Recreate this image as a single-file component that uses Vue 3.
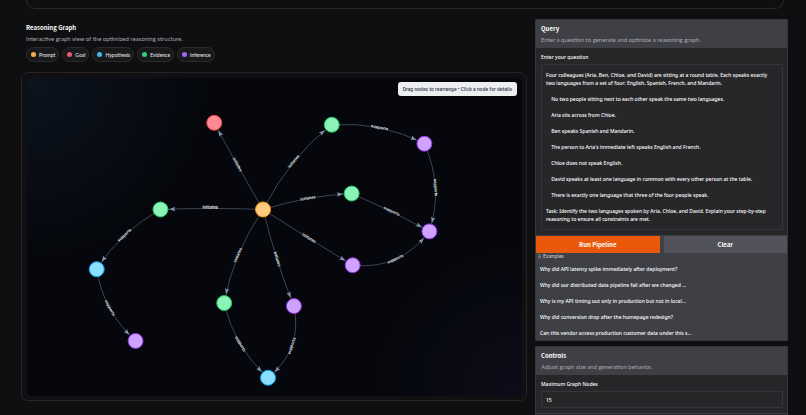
<template>
  <div class="page">
    <header class="hero"></header>

    <main class="layout">
      <section class="graph-column">
        <div class="intro">
          <h2>Reasoning Graph</h2>
          <p>Interactive graph view of the optimized reasoning structure.</p>
          <ul class="legend">
            <li v-for="item in legend" :key="item.type">
              <span class="dot" :class="item.type"></span>{{ item.label }}
            </li>
          </ul>
        </div>

        <div class="graph-frame">
          <div class="graph-canvas">
            <svg viewBox="0 0 497 319" role="img" aria-label="Reasoning Graph">
              <g v-for="edge in drawnEdges" :key="edge.id">
                <path class="edge" :d="edge.path" />
                <path class="arrow" d="M0 0 L-6 -2.2 L-5 0 L-6 2.2 Z" :transform="edge.arrow" />
                <text class="edge-label" y="1" :transform="edge.labelAt">{{ edge.label }}</text>
              </g>
              <circle
                v-for="(node, id) in nodes"
                :key="id"
                class="node"
                :class="node.type"
                :cx="node.x"
                :cy="node.y"
                r="7.5"
              />
            </svg>
            <div class="hint">Drag nodes to rearrange • Click a node for details</div>
          </div>
        </div>
      </section>

      <aside class="side-column">
        <form class="panel" @submit.prevent="runPipeline">
          <div class="panel-header">
            <h2>Query</h2>
            <p>Enter a question to generate and optimize a reasoning graph.</p>
          </div>
          <div class="panel-body">
            <label for="question">Enter your question</label>
            <textarea id="question" v-model="question" spellcheck="false"></textarea>
          </div>
          <div class="actions">
            <button type="submit" class="run-btn">Run Pipeline</button>
            <button type="button" class="clear-btn" @click="question = ''">Clear</button>
          </div>
          <div class="examples">
            <h3>
              <svg class="list-icon" viewBox="0 0 4 6" aria-hidden="true">
                <path d="M0 1h1M2 1h2M0 3h1M2 3h2M0 5h1M2 5h2" />
              </svg>
              Examples
            </h3>
            <button
              v-for="example in examples"
              :key="example"
              type="button"
              @click="question = example"
            >{{ example }}</button>
          </div>
        </form>

        <section class="panel">
          <div class="panel-header">
            <h2>Controls</h2>
            <p>Adjust graph size and generation behavior.</p>
          </div>
          <div class="panel-body">
            <label for="maxNodes">Maximum Graph Nodes</label>
            <input id="maxNodes" v-model="maxNodes" type="text" inputmode="numeric" />
          </div>
          <div class="panel-body next-body"></div>
        </section>
      </aside>
    </main>
  </div>
</template>

<script setup>
import { ref, computed } from 'vue'

const legend = [
  { type: 'prompt', label: 'Prompt' },
  { type: 'goal', label: 'Goal' },
  { type: 'hypothesis', label: 'Hypothesis' },
  { type: 'evidence', label: 'Evidence' },
  { type: 'inference', label: 'Inference' },
]

const nodes = {
  p: { type: 'prompt', x: 237, y: 132 },
  g: { type: 'goal', x: 188, y: 45 },
  e1: { type: 'evidence', x: 306, y: 47 },
  e2: { type: 'evidence', x: 326, y: 116 },
  e3: { type: 'evidence', x: 198, y: 226 },
  e4: { type: 'evidence', x: 134, y: 132 },
  h1: { type: 'hypothesis', x: 242, y: 301 },
  h2: { type: 'hypothesis', x: 70, y: 192 },
  i1: { type: 'inference', x: 399, y: 66 },
  i2: { type: 'inference', x: 404, y: 154 },
  i3: { type: 'inference', x: 327, y: 188 },
  i4: { type: 'inference', x: 268, y: 229 },
  i5: { type: 'inference', x: 109, y: 264 },
}

// mid is the point the curve passes through halfway
const edges = [
  { from: 'p', to: 'g', label: 'initiates', mid: [211, 87] },
  { from: 'p', to: 'e1', label: 'initiates', mid: [268, 84] },
  { from: 'e1', to: 'i1', label: 'supports', mid: [354, 50] },
  { from: 'i1', to: 'i2', label: 'supports', mid: [410, 110] },
  { from: 'p', to: 'e2', label: 'initiates', mid: [282, 121] },
  { from: 'e2', to: 'i2', label: 'supports', mid: [366, 134] },
  { from: 'p', to: 'i3', label: 'initiates', mid: [283, 161] },
  { from: 'i3', to: 'i2', label: 'supports', mid: [370, 182] },
  { from: 'p', to: 'i4', label: 'initiates', mid: [251, 182] },
  { from: 'p', to: 'e3', label: 'initiates', mid: [212, 178] },
  { from: 'e3', to: 'h1', label: 'supports', mid: [214, 267] },
  { from: 'i4', to: 'h1', label: 'supports', mid: [266, 269] },
  { from: 'p', to: 'e4', label: 'initiates', mid: [184, 131] },
  { from: 'e4', to: 'h2', label: 'supports', mid: [98, 158] },
  { from: 'h2', to: 'i5', label: 'supports', mid: [83, 231] },
]

const degrees = (dx, dy) => (Math.atan2(dy, dx) * 180) / Math.PI

const drawEdge = (edge) => {
  const a = nodes[edge.from]
  const b = nodes[edge.to]
  const [mx, my] = edge.mid
  const cx = 2 * mx - (a.x + b.x) / 2
  const cy = 2 * my - (a.y + b.y) / 2

  const pointAt = (t) => [
    (1 - t) ** 2 * a.x + 2 * t * (1 - t) * cx + t * t * b.x,
    (1 - t) ** 2 * a.y + 2 * t * (1 - t) * cy + t * t * b.y,
  ]

  // walk back from the target until the tip is outside the circle
  let t = 1
  let tip = pointAt(t)
  while (t > 0.5 && Math.hypot(tip[0] - b.x, tip[1] - b.y) < 8.5) {
    t -= 0.005
    tip = pointAt(t)
  }
  const back = pointAt(t - 0.04)

  let angle = degrees(b.x - a.x, b.y - a.y)
  if (angle > 90) angle -= 180
  if (angle < -90) angle += 180

  return {
    id: edge.from + edge.to,
    label: edge.label,
    path: `M${a.x} ${a.y} Q${cx} ${cy} ${b.x} ${b.y}`,
    arrow: `translate(${tip[0]} ${tip[1]}) rotate(${degrees(tip[0] - back[0], tip[1] - back[1])})`,
    labelAt: `translate(${mx} ${my}) rotate(${angle})`,
  }
}

const drawnEdges = computed(() => edges.map(drawEdge))

const examples = [
  'Why did API latency spike immediately after deployment?',
  'Why did our distributed data pipeline fail after we changed ...',
  'Why is my API timing out only in production but not in local...',
  'Why did conversion drop after the homepage redesign?',
  'Can this vendor access production customer data under this s...',
]

const question = ref(`Four colleagues (Aria, Ben, Chloe, and David) are sitting at a round table. Each speaks exactly two languages from a set of four: English, Spanish, French, and Mandarin.

    No two people sitting next to each other speak the same two languages.

    Aria sits across from Chloe.

    Ben speaks Spanish and Mandarin.

    The person to Aria's immediate left speaks English and French.

    Chloe does not speak English.

    David speaks at least one language in common with every other person at the table.

    There is exactly one language that three of the four people speak.

Task: Identify the two languages spoken by Aria, Chloe, and David. Explain your step-by-step reasoning to ensure all constraints are met.`)

const maxNodes = ref('15')

const runPipeline = () => {
  console.log('run', question.value, maxNodes.value)
}
</script>

<style>
body {
  background: #0f0f11;
}
</style>

<style scoped>
* {
  box-sizing: border-box;
}

.page {
  height: 100vh;
  overflow: hidden;
  padding: 0 18px 0 21px;
  background: #0f0f11;
  color: #ffffff;
  font-family: 'Noto Sans', sans-serif;
  font-size: 5px;
  font-weight: 500;
  line-height: 8px;
}

h2,
h3,
p,
ul {
  margin: 0;
  padding: 0;
}

h2 {
  margin-bottom: 1px;
  font-family: 'Noto Sans CJK SC', sans-serif;
  font-size: 6px;
  line-height: 10px;
  font-weight: 700;
}

p {
  font-family: Lato, sans-serif;
  font-size: 6px;
  font-weight: 400;
  line-height: 10px;
  color: #a9a9b2;
}

.hero {
  height: 9px;
  margin: 0 4px 0 5px;
  border: 1px solid #29292c;
  border-top: none;
  border-radius: 0 0 10px 10px;
}

.layout {
  display: grid;
  grid-template-columns: 2fr 1fr;
  gap: 8px;
  margin-top: 10px;
}

.graph-column,
.side-column {
  min-width: 0;
}

.intro {
  padding: 4px 5px 0;
}

.legend {
  display: flex;
  gap: 3px;
  margin-top: 3px;
  list-style: none;
}

.legend li {
  display: flex;
  align-items: center;
  gap: 3px;
  height: 15px;
  padding: 0 3px 0 4px;
  border: 1px solid #2b2b2e;
  border-radius: 8px;
  background: #19191b;
  font-family: Lato, sans-serif;
  color: #e4e4e7;
}

.dot {
  width: 5px;
  height: 5px;
  border-radius: 50%;
}

.dot.prompt {
  background: #f6ad4f;
}

.dot.goal {
  background: #e85d6f;
}

.dot.hypothesis {
  background: #45b8f0;
}

.dot.evidence {
  background: #34d07f;
}

.dot.inference {
  background: #a965f5;
}

.graph-frame {
  margin-top: 10px;
  padding: 5px 4px 4px 5px;
  border: 1px solid #252527;
  border-radius: 7px;
  background: #101012;
}

.graph-canvas {
  position: relative;
  border-radius: 5px;
  background:
    radial-gradient(circle at 0 0, rgba(40, 70, 110, 0.2), transparent 30%),
    radial-gradient(circle at 100% 100%, rgba(70, 50, 120, 0.12), transparent 25%),
    #05070c;
}

.graph-canvas svg {
  display: block;
  width: 100%;
  height: auto;
}

.edge {
  fill: none;
  stroke: #4b5565;
  stroke-width: 0.8;
}

.arrow {
  fill: #8095ae;
}

.edge-label {
  fill: #e2e8f0;
  stroke: #05070c;
  stroke-width: 1;
  paint-order: stroke;
  font-family: Inter, sans-serif;
  font-size: 4px;
  font-weight: 700;
  text-anchor: middle;
}

.node {
  stroke-width: 1;
  cursor: pointer;
}

.node.prompt {
  fill: #ffcb80;
  stroke: #f59e0b;
}

.node.goal {
  fill: #ff8994;
  stroke: #ef4444;
}

.node.hypothesis {
  fill: #8adfff;
  stroke: #0ea5e9;
}

.node.evidence {
  fill: #8af3b6;
  stroke: #22c55e;
}

.node.inference {
  fill: #d0a2ff;
  stroke: #9333ea;
}

.hint {
  position: absolute;
  top: 4px;
  right: 5px;
  padding: 3px 5px;
  border-radius: 3px;
  background: #eceef0;
  color: #374151;
  font-family: Roboto, sans-serif;
}

.side-column {
  display: flex;
  flex-direction: column;
  gap: 5px;
}

.panel {
  border: 1px solid #36363b;
  border-radius: 1px;
  background: #3f3f46;
}

.panel-header {
  padding: 4px 5px 3px;
}

.panel-body {
  padding: 5px 4px 5px 5px;
  background: #27272a;
}

.panel-body label {
  display: block;
  margin-bottom: 3px;
}

textarea,
input {
  display: block;
  width: 100%;
  border: 1px solid #35353a;
  border-radius: 1px;
  outline: none;
  background: #27272a;
  color: #ffffff;
  font: inherit;
}

textarea {
  height: 166px;
  padding: 6px 10px 5px 4px;
  overflow: hidden;
  resize: none;
}

input {
  height: 17px;
  padding: 0 4px;
}

button {
  border: none;
  color: #ffffff;
  font: inherit;
  cursor: pointer;
}

.actions {
  display: grid;
  grid-template-columns: 1fr 1fr;
  gap: 4px;
  padding-top: 1px;
}

.actions button {
  height: 17px;
  padding: 0;
  font-family: 'Noto Sans CJK SC', sans-serif;
  font-size: 6px;
  font-weight: 700;
}

.run-btn {
  background: #ea580c;
}

.clear-btn {
  background: #52525b;
}

.examples {
  display: flex;
  flex-direction: column;
  gap: 1px;
}

.examples h3 {
  display: flex;
  align-items: center;
  gap: 2px;
  padding: 0 2px;
  font-family: Lato, sans-serif;
  font-size: 5px;
  line-height: 7px;
  font-weight: 400;
  color: #d4d4d8;
}

.list-icon {
  width: 3px;
  height: 5px;
  fill: none;
  stroke: #a1a1aa;
}

.examples button {
  height: 15px;
  padding: 0 4px;
  background: none;
  text-align: left;
}

.next-body {
  height: 20px;
  margin-top: 1px;
}
</style>
